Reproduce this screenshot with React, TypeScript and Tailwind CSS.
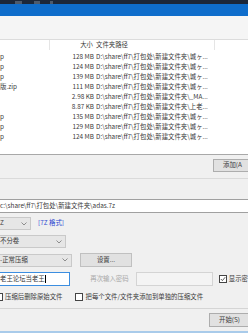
import React from "react";

const rows = [
    { name: "p", size: "128 MB", path: "D:\\share\\ff7\\打包处\\新建文件夹\\城ヶ..." },
    { name: "p", size: "124 MB", path: "D:\\share\\ff7\\打包处\\新建文件夹\\城ヶ..." },
    { name: "p", size: "139 MB", path: "D:\\share\\ff7\\打包处\\新建文件夹\\城ヶ..." },
    { name: "版.zip", size: "111 MB", path: "D:\\share\\ff7\\打包处\\新建文件夹\\城ヶ..." },
    { name: "", size: "2.98 KB", path: "D:\\share\\ff7\\打包处\\新建文件夹\\_MA..." },
    { name: "", size: "8.87 KB", path: "D:\\share\\ff7\\打包处\\新建文件夹\\上老..." },
    { name: "p", size: "135 MB", path: "D:\\share\\ff7\\打包处\\新建文件夹\\城ヶ..." },
    { name: "p", size: "129 MB", path: "D:\\share\\ff7\\打包处\\新建文件夹\\城ヶ..." },
    { name: "p", size: "124 MB", path: "D:\\share\\ff7\\打包处\\新建文件夹\\城ヶ..." },
];

function Chevron() {
    return (
        <svg width="6" height="4" viewBox="0 0 6 4" className="shrink-0">
            <path d="M0.5 0.5 L3 3 L5.5 0.5" fill="none" stroke="#666" strokeWidth="0.7" />
        </svg>
    );
}

function Select({ label, width }: { label: string; width: string }) {
    return (
        <div className={`${width} h-[13px] flex items-center justify-between pr-[3px] bg-[#e6e6e6] border border-[#c9c9c9] border-l-0`}>
            <span className="whitespace-nowrap">{label}</span>
            <Chevron />
        </div>
    );
}

function Checkbox({ checked }: { checked?: boolean }) {
    return (
        <span className="w-[8px] h-[8px] shrink-0 border border-[#444] bg-white flex items-center justify-center">
            {checked && (
                <svg width="6" height="6" viewBox="0 0 6 6">
                    <path d="M0.8 3 L2.4 4.6 L5.2 1.2" fill="none" stroke="#333" strokeWidth="0.8" />
                </svg>
            )}
        </span>
    );
}

export default function App() {
    return (
        <div className="w-[248px] h-[333px] overflow-hidden flex flex-col bg-[#f0f0f0] text-[6.4px] leading-none text-[#3a3a3a] font-['Noto_Sans_CJK_SC','Noto_Sans',sans-serif]">
            <div className="h-[4px] shrink-0 bg-[#1c2739] flex items-end">
                <div className="ml-[15px] w-[7px] h-[3px] bg-[#4d5a6c]" />
                <div className="ml-[12px] w-[6px] h-[3px] bg-[#4d5a6c]" />
                <div className="ml-[10px] w-[3px] h-[3px] bg-[#4d5a6c]" />
            </div>
            <div className="h-[12px] shrink-0 bg-[#0f6dcb]" />
            <div className="h-[24px] shrink-0 bg-[#f5f5f5] border-b border-[#dcdcdc]" />

            <div className="h-[115px] shrink-0 bg-white border-b border-[#a8a8a8] flex flex-col">
                <div className="h-[10px] flex items-center">
                    <div className="w-[50px] h-full border-r border-[#e5e5e5]" />
                    <div className="w-[43px] text-right">大小</div>
                    <div className="w-[122px] h-full pl-[3px] flex items-center border-r border-[#e5e5e5]">文件夹路径</div>
                </div>
                <div className="mt-[2px] flex flex-col">
                    {rows.map((r, i) => (
                        <div key={i} className="h-[10px] flex items-center">
                            <div className="w-[50px] whitespace-nowrap">{r.name}</div>
                            <div className="w-[44px] text-right whitespace-nowrap">{r.size}</div>
                            <div className="pl-[2px] whitespace-nowrap">{r.path}</div>
                        </div>
                    ))}
                </div>
            </div>

            <div className="h-[24px] shrink-0 flex items-center justify-end border-b border-[#dadada]">
                <div className="w-[35px] h-[13px] mt-[-3px] bg-[#e1e1e1] border border-[#adadad] border-r-0 flex items-center pl-[9px] whitespace-nowrap">添加(A</div>
            </div>

            <div className="h-[20px] shrink-0" />

            <div className="h-[14px] shrink-0 bg-white border-y border-[#a0a0a0] flex items-center whitespace-nowrap">c:\share\ff7\打包处\新建文件夹\adas.7z</div>

            <div className="mt-[4px] h-[13px] shrink-0 flex items-center">
                <Select label="Z" width="w-[31px]" />
                <span className="ml-[7px] text-[#2a47d0]">[7Z 格式]</span>
            </div>

            <div className="mt-[5px] h-[13px] shrink-0 flex items-center">
                <Select label="不分卷" width="w-[66px]" />
            </div>

            <div className="mt-[5px] h-[14px] shrink-0 flex items-center">
                <Select label="-正常压缩" width="w-[72px]" />
                <div className="ml-[8px] w-[52px] h-[14px] bg-[#e1e1e1] border border-[#c0c0c0] flex items-center justify-center">设置...</div>
            </div>

            <div className="mt-[5px] h-[14px] shrink-0 flex items-center">
                <div className="w-[72px] h-[14px] bg-white border border-[#3c8ee0] border-l-0 flex items-center whitespace-nowrap">老王论坛当老王<span className="w-px h-[8px] bg-black" /></div>
                <span className="ml-[20px] text-[#a8a8a8] whitespace-nowrap">再次输入密码</span>
                <div className="ml-[7px] w-[79px] h-[14px] bg-[#f4f4f4] border border-[#d4d4d4]" />
                <div className="ml-[6px] flex items-center gap-[2px] whitespace-nowrap">
                    <Checkbox checked />
                    <span>显示密</span>
                </div>
            </div>

            <div className="mt-[6px] h-[10px] shrink-0 flex items-center whitespace-nowrap">
                <div className="flex items-center gap-[2px] ml-[-5px]">
                    <Checkbox />
                    <span>压缩后删除原始文件</span>
                </div>
                <div className="ml-[12px] flex items-center gap-[3px]">
                    <Checkbox />
                    <span>把每个文件/文件夹添加到单独的压缩文件</span>
                </div>
            </div>

            <div className="mt-[6px] h-px shrink-0 bg-[#d5d5d5]" />

            <div className="flex-1 flex items-center justify-end">
                <div className="w-[39px] h-[14px] bg-[#e1e1e1] border border-[#adadad] border-r-0 flex items-center pl-[9px] whitespace-nowrap">开始(S)</div>
            </div>

            <div className="h-[2px] shrink-0 bg-[#a9cbea]" />
        </div>
    );
}
